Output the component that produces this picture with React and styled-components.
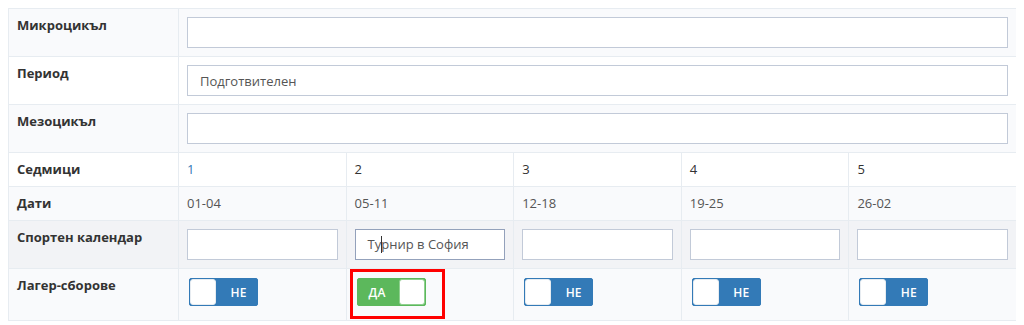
import React from "react";
import styled, { createGlobalStyle, css } from "styled-components";

const GlobalStyle = createGlobalStyle`
  body {
    margin: 8px;
    background: #fff;
    font-family: "Open Sans", "Liberation Sans", sans-serif;
    font-size: 13px;
    color: #333;
  }
`;

const Table = styled.table`
  width: calc(100% + 1px);
  table-layout: fixed;
  border-collapse: collapse;
  border: 1px solid #e7ecf1;
`;

const Row = styled.tr`
  background: ${(p) =>
    p.$hover ? "#f2f3f6" : p.$striped ? "#f9fafc" : "#fff"};
`;

const Label = styled.td`
  padding: 8px;
  vertical-align: top;
  border: 1px solid #e7ecf1;
  font-weight: 700;
  line-height: 17px;
  color: #333;
`;

const Cell = styled.td`
  position: relative;
  padding: 8px;
  vertical-align: top;
  border: 1px solid #e7ecf1;
  line-height: 17px;
  color: ${(p) => p.$color || "#555"};
`;

const fieldBase = css`
  display: block;
  box-sizing: border-box;
  width: 100%;
  height: 31px;
  margin: 0;
  padding: 0 12px;
  border: 1px solid #c2cad8;
  border-radius: 0;
  background: #fff;
  font-family: "Open Sans", "Liberation Sans", sans-serif;
  font-size: 13px;
  color: #555;
  outline: none;
`;

const Input = styled.input`
  ${fieldBase}
`;

const FocusedField = styled.div`
  ${fieldBase}
  border-color: #93a1bb;
  line-height: 29px;
  white-space: nowrap;
  overflow: hidden;
`;

const Caret = styled.span`
  display: inline-block;
  width: 1px;
  height: 17px;
  margin: 0 -1px 0 0;
  background: #333;
  vertical-align: middle;
  position: relative;
  top: -1px;
`;

const Switch = styled.div`
  display: flex;
  flex-direction: ${(p) => (p.$on ? "row" : "row-reverse")};
  box-sizing: border-box;
  width: 69px;
  height: 28px;
  margin: 1px 0 6px 2px;
  border: 1px solid ${(p) => (p.$on ? "#5cb85c" : "#337ab7")};
  border-radius: 2px;
  background: ${(p) => (p.$on ? "#5cb85c" : "#337ab7")};
  overflow: hidden;
`;

const SwitchLabel = styled.span`
  flex: 1;
  display: flex;
  align-items: center;
  justify-content: center;
  padding: ${(p) => (p.$on ? "0 2px 0 0" : "0 0 0 4px")};
  color: #fff;
  font-size: 12px;
  font-weight: 600;
  letter-spacing: 0.2px;
`;

const Knob = styled.span`
  width: 26px;
  background: #fff;
  border-radius: 3px;
  border: 1px solid ${(p) => (p.$on ? "#8fd08f" : "#e7ecf1")};
  box-sizing: border-box;
`;

const Highlight = styled.div`
  position: absolute;
  left: 3px;
  top: 0;
  width: 95px;
  height: 50px;
  box-sizing: border-box;
  border: 3px solid #f00;
  pointer-events: none;
`;

const weeks = [
  { n: "1", dates: "01-04", event: "", camp: false },
  { n: "2", dates: "05-11", event: "Турнир в София", camp: true, focus: true },
  { n: "3", dates: "12-18", event: "", camp: false },
  { n: "4", dates: "19-25", event: "", camp: false },
  { n: "5", dates: "26-02", event: "", camp: false },
];

function Toggle({ on }) {
  return (
    <Switch $on={on}>
      <SwitchLabel $on={on}>{on ? "ДА" : "НЕ"}</SwitchLabel>
      <Knob $on={on} />
    </Switch>
  );
}

export default function App() {
  return (
    <>
      <GlobalStyle />
      <Table>
        <colgroup>
          <col style={{ width: 170 }} />
          <col />
          <col />
          <col />
          <col />
          <col />
        </colgroup>
        <tbody>
          <Row $striped>
            <Label>Микроцикъл</Label>
            <Cell colSpan={5}>
              <Input defaultValue="" />
            </Cell>
          </Row>
          <Row>
            <Label>Период</Label>
            <Cell colSpan={5}>
              <Input defaultValue="Подготвителен" />
            </Cell>
          </Row>
          <Row $striped>
            <Label>Мезоцикъл</Label>
            <Cell colSpan={5}>
              <Input defaultValue="" />
            </Cell>
          </Row>
          <Row>
            <Label>Седмици</Label>
            {weeks.map((w, i) => (
              <Cell key={w.n} $color={i === 0 ? "#337ab7" : "#333"}>
                {w.n}
              </Cell>
            ))}
          </Row>
          <Row $striped>
            <Label>Дати</Label>
            {weeks.map((w) => (
              <Cell key={w.n}>{w.dates}</Cell>
            ))}
          </Row>
          <Row $hover>
            <Label>Спортен календар</Label>
            {weeks.map((w) => (
              <Cell key={w.n}>
                {w.focus ? (
                  <FocusedField>
                    Ту
                    <Caret />
                    рнир в София
                  </FocusedField>
                ) : (
                  <Input defaultValue={w.event} />
                )}
              </Cell>
            ))}
          </Row>
          <Row $striped>
            <Label>Лагер-сборове</Label>
            {weeks.map((w) => (
              <Cell key={w.n}>
                <Toggle on={w.camp} />
                {w.camp && <Highlight />}
              </Cell>
            ))}
          </Row>
        </tbody>
      </Table>
    </>
  );
}
